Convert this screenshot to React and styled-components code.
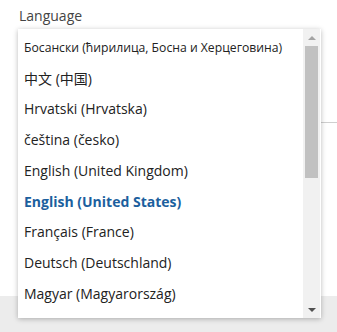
import React from "react";
import styled, { createGlobalStyle } from "styled-components";

const Global = createGlobalStyle`
  html, body { margin: 0; padding: 0; background: #fff; }
  body { font-family: "Open Sans", "Noto Sans CJK SC", sans-serif; }
`;

const Page = styled.div`
  position: relative;
  width: 337px;
  height: 332px;
  overflow: hidden;
  display: flex;
  flex-direction: column;
`;

const Body = styled.div`
  flex: 1;
  padding: 6px 0 0 19px;
  display: flex;
  flex-direction: column;
`;

const Label = styled.div`
  font-size: 14px;
  line-height: 20px;
  color: #444;
`;

const FieldLine = styled.div`
  margin-top: 96px;
  margin-left: 280px;
  border-top: 1px solid #cfcfcf;
`;

const Footer = styled.div`
  height: 36px;
  background: #ececec;
`;

const Popup = styled.div`
  position: absolute;
  left: 18px;
  top: 29px;
  width: 303px;
  height: 289px;
  background: #fff;
  box-shadow: 0 1px 5px rgba(0, 0, 0, 0.28);
  display: flex;
`;

const List = styled.ul`
  flex: 1;
  margin: 0;
  padding: 3px 0 0 6px;
  list-style: none;
  overflow: hidden;
`;

const Item = styled.li`
  height: 30.75px;
  display: flex;
  align-items: center;
  white-space: nowrap;
  font-size: ${(p) => (p.$small ? "12.2px" : "14px")};
  font-weight: ${(p) => (p.$selected ? 700 : 400)};
  color: ${(p) => (p.$selected ? "#1c5f9e" : "#222")};
`;

const Scrollbar = styled.div`
  width: 17px;
  margin-right: 1px;
  background: #f1f1f1;
  display: flex;
  flex-direction: column;
`;

const Arrow = styled.div`
  height: 17px;
  display: flex;
  align-items: center;
  justify-content: center;
`;

const Track = styled.div`
  flex: 1;
  padding: 0 2px;
`;

const Thumb = styled.div`
  height: 132px;
  background: #c1c1c1;
`;

const items = [
  "Босански (ћирилица, Босна и Херцеговина)",
  "中文 (中国)",
  "Hrvatski (Hrvatska)",
  "čeština (česko)",
  "English (United Kingdom)",
  "English (United States)",
  "Français (France)",
  "Deutsch (Deutschland)",
  "Magyar (Magyarország)",
];

export default function App() {
  return (
    <Page>
      <Global />
      <Body>
        <Label>Language</Label>
        <FieldLine />
      </Body>
      <Footer />
      <Popup>
        <List>
          {items.map((t, i) => (
            <Item key={t} $small={i === 0} $selected={i === 5}>
              {t}
            </Item>
          ))}
        </List>
        <Scrollbar>
          <Arrow>
            <svg width="8" height="4" viewBox="0 0 8 4">
              <path d="M0 4 L4 0 L8 4 Z" fill="#a3a3a3" />
            </svg>
          </Arrow>
          <Track>
            <Thumb />
          </Track>
          <Arrow>
            <svg width="8" height="4" viewBox="0 0 8 4">
              <path d="M0 0 L8 0 L4 4 Z" fill="#505050" />
            </svg>
          </Arrow>
        </Scrollbar>
      </Popup>
    </Page>
  );
}
